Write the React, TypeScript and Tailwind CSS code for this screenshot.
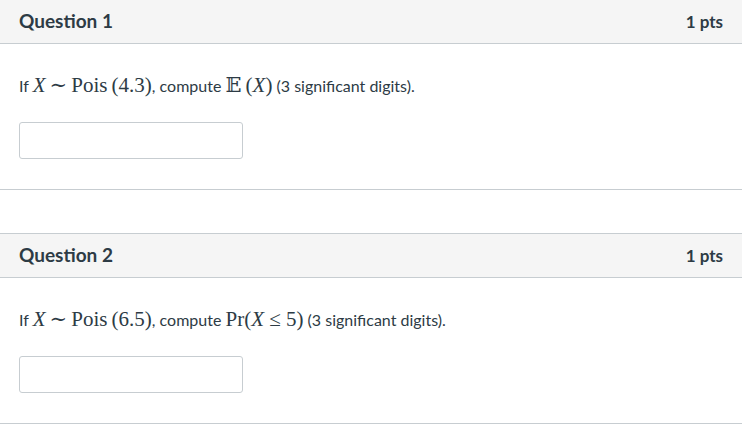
const MATH = "font-['Liberation_Serif','DejaVu_Serif',serif] text-[21px]"

function M({ children, italic }: { children: React.ReactNode; italic?: boolean }) {
  return <span className={`${MATH} ${italic ? 'italic' : ''}`}>{children}</span>
}

function Question({ title, children, first }: { title: string; children: React.ReactNode; first?: boolean }) {
  return (
    <div className={`border-y border-[#c7cdd1] ${first ? '-mt-px' : 'mt-[43px]'}`}>
      <div className="flex h-[44px] items-center justify-between border-b border-[#c7cdd1] bg-[#f5f5f5] px-[19px] font-bold text-[#2d3b45]">
        <h2 className="text-[19px]">{title}</h2>
        <span className="text-[17px]">1 pts</span>
      </div>
      <div className="px-[19px] pt-[29px] pb-[30px]">
        <p className="h-[24px] whitespace-nowrap text-[16px] leading-[24px] text-[#2d3b45]">{children}</p>
        <input className="mt-[25px] block h-[37px] w-[224px] rounded-[3px] border border-[#c7cdd1] bg-white" />
      </div>
    </div>
  )
}

export default function App() {
  return (
    <div className="h-[426px] w-[742px] overflow-hidden bg-white font-['Lato','Liberation_Sans',sans-serif]">
      <Question title="Question 1" first>
        If <M italic>X</M> <M>∼</M> <M>Pois</M> <M>(4.3)</M>, compute <M>𝔼</M> <M>(<i>X</i>)</M> (3 significant digits).
      </Question>
      <Question title="Question 2">
        If <M italic>X</M> <M>∼</M> <M>Pois</M> <M>(6.5)</M>, compute <M>Pr(<i>X</i> ≤ 5)</M> (3 significant digits).
      </Question>
    </div>
  )
}
